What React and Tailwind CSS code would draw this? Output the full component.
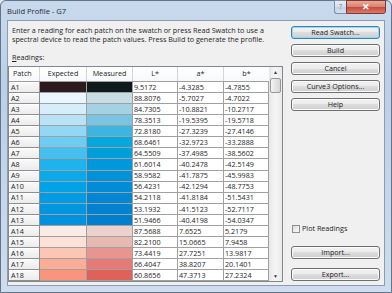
const rows = [
  ['A1', '#2c1a1e', '#0f1a1c', '9.5172', '-4.3285', '-4.7855'],
  ['A2', '#eaf6fd', '#c8dde3', '88.8076', '-5.7027', '-4.7022'],
  ['A3', '#d5eefa', '#a4d2e3', '84.7305', '-10.8821', '-10.2717'],
  ['A4', '#b8e3f7', '#78c4e2', '78.3513', '-19.5395', '-19.5718'],
  ['A5', '#94d7f5', '#3db5e0', '72.8180', '-27.3239', '-27.4146'],
  ['A6', '#6ecbf2', '#04a8de', '68.6461', '-32.9723', '-33.2888'],
  ['A7', '#45bff0', '#009fdc', '64.5509', '-37.4985', '-38.5602'],
  ['A8', '#1fb3ee', '#0098da', '61.6014', '-40.2478', '-42.5149'],
  ['A9', '#0aa9ea', '#0092d8', '58.9582', '-41.7875', '-45.9983'],
  ['A10', '#02a2e6', '#008cd6', '56.4231', '-42.1294', '-48.7753'],
  ['A11', '#009be3', '#0086d2', '54.2118', '-41.8184', '-51.5431'],
  ['A12', '#0096e0', '#0082d0', '53.1932', '-41.5123', '-52.7117'],
  ['A13', '#0092de', '#007fce', '51.9466', '-40.4198', '-54.0347'],
  ['A14', '#faebe6', '#ecd2cc', '87.5688', '7.6525', '5.2179'],
  ['A15', '#fde0d6', '#e8b8b2', '82.2100', '15.0665', '7.9458'],
  ['A16', '#fcc6b4', '#e89490', '73.4419', '27.7251', '13.9817'],
  ['A17', '#fbad95', '#e57a76', '66.4047', '38.8207', '20.1401'],
  ['A18', '#f8957c', '#e0605a', '60.8656', '47.3713', '27.2324'],
];

const btn =
  'h-[13px] w-full flex items-center justify-center rounded-[3px] border text-[#1e1e1e] bg-[linear-gradient(#f2f2f2_0%,#ebebeb_50%,#dddddd_50%,#cfcfcf_100%)]';

function Button({ children, primary }) {
  return (
    <div
      className={`${btn} ${
        primary
          ? 'border-[#3c7fb1] shadow-[inset_0_0_0_1px_#8fdaf8]'
          : 'border-[#707070] shadow-[inset_0_0_0_1px_#fbfbfb]'
      }`}
    >
      {children}
    </div>
  );
}

export default function App() {
  return (
    <div className="w-[392px] h-[293px] overflow-hidden bg-[#dfe7f1] font-['Open_Sans',sans-serif] text-[7.2px] leading-[8.6px] text-[#1e1e1e]">
      <div className="h-full flex flex-col rounded-t-[6px] border border-[#60758c] bg-[linear-gradient(#c9d9ed,#bccfe6_30%,#cfdcee)]">
        {/* Title bar */}
        <div className="h-[19px] flex items-start shrink-0">
          <div className="pl-[6px] pt-[6px] text-[7.6px] text-[#1e2a38]">Build Profile - G7</div>
          <div className="ml-auto mr-[5px] flex -mt-px">
            <div className="w-[12px] h-[14px] flex items-center justify-center border border-[#7d8fa4] border-r-0 rounded-bl-[3px] bg-[linear-gradient(#e8eef6,#d3dfec_50%,#c2d2e5_50%,#d6e2ef)] text-[7px] text-[#6b7b8e]">
              ?
            </div>
            <div className="w-[40px] h-[14px] flex items-center justify-center border border-[#7b3a33] rounded-br-[3px] bg-[linear-gradient(#e9a99b,#d9806f_50%,#c6483a_50%,#d97a66)] text-white text-[9px] font-bold">
              ✕
            </div>
          </div>
        </div>

        {/* Client area */}
        <div className="flex-1 mx-[6px] mb-[6px] border border-[#8a9db3] bg-[#f0f0f0] flex">
          <div className="w-[277px] flex flex-col">
            <div className="mt-[5px] ml-[4px] whitespace-nowrap">
              Enter a reading for each patch on the swatch or press Read Swatch to use a
              <br />
              spectral device to read the patch values. Press Build to generate the profile.
            </div>
            <div className="mt-[10px] ml-[4px]">
              <span className="underline">R</span>eadings:
            </div>

            {/* Grid */}
            <div className="mt-[4px] w-[275px] border border-[#828790] bg-white flex">
              <div className="w-[260px]">
                <div className="h-[15px] flex border-b border-[#a0a0a0] bg-[linear-gradient(#ffffff,#f7f8fa)]">
                  <div className="w-[31px] flex items-center pl-[4px] border-r border-[#d5d5d5]">Patch</div>
                  <div className="w-[47px] flex items-center justify-center border-r border-[#d5d5d5]">Expected</div>
                  <div className="w-[46px] flex items-center justify-center border-r border-[#d5d5d5]">Measured</div>
                  <div className="w-[45px] flex items-center justify-center border-r border-[#d5d5d5]">L*</div>
                  <div className="w-[46px] flex items-center justify-center border-r border-[#d5d5d5]">a*</div>
                  <div className="w-[45px] flex items-center justify-center">b*</div>
                </div>
                {rows.map((r) => (
                  <div key={r[0]} className="h-[11.1px] flex">
                    <div className="w-[31px] flex items-center pl-[2px] border-r border-b border-[#8f8f8f] bg-[linear-gradient(#fafafa,#ececec)] shadow-[inset_1px_1px_0_#ffffff]">
                      {r[0]}
                    </div>
                    <div className="w-[47px] border-r border-b border-[#a0a0a0]" style={{ backgroundColor: r[1] }} />
                    <div className="w-[46px] border-r border-b border-[#a0a0a0]" style={{ backgroundColor: r[2] }} />
                    <div className="w-[45px] flex items-center pl-[1px] border-r border-b border-[#a0a0a0]">{r[3]}</div>
                    <div className="w-[46px] flex items-center pl-[1px] border-r border-b border-[#a0a0a0]">{r[4]}</div>
                    <div className="w-[45px] flex items-center pl-[1px] border-r border-b border-[#a0a0a0]">{r[5]}</div>
                  </div>
                ))}
              </div>

              {/* Scrollbar */}
              <div className="w-[13px] flex flex-col bg-[linear-gradient(90deg,#e6e6e6,#f4f4f4_40%,#f4f4f4_60%,#e9e9e9)]">
                <div className="h-[11px] flex items-center justify-center text-[5px] text-[#3a3a3a]">▲</div>
                <div className="h-[15px] mx-[1px] rounded-[2px] border border-[#979797] bg-[linear-gradient(90deg,#f4f4f4,#e4e4e4_50%,#d6d6d6)]" />
                <div className="flex-1" />
                <div className="h-[11px] flex items-center justify-center text-[5px] text-[#3a3a3a]">▼</div>
              </div>
            </div>
          </div>

          {/* Right buttons */}
          <div className="ml-auto mr-[4px] w-[89px] flex flex-col">
            <div className="mt-[5px] flex flex-col gap-[5px]">
              <Button primary>Read Swatch...</Button>
              <Button>Build</Button>
              <Button>Cancel</Button>
              <Button>Curve3 Options...</Button>
              <Button>Help</Button>
            </div>
            <div className="mt-auto flex items-center gap-[2px] ml-[1px]">
              <div className="w-[8px] h-[8px] border border-[#8e8f8f] bg-[linear-gradient(135deg,#dcdcdc,#fbfbfb)]" />
              <span>Plot Readings</span>
            </div>
            <div className="mt-[13px] mb-[4px] flex flex-col gap-[9px]">
              <Button>Import...</Button>
              <Button>Export...</Button>
            </div>
          </div>
        </div>
      </div>
    </div>
  );
}
